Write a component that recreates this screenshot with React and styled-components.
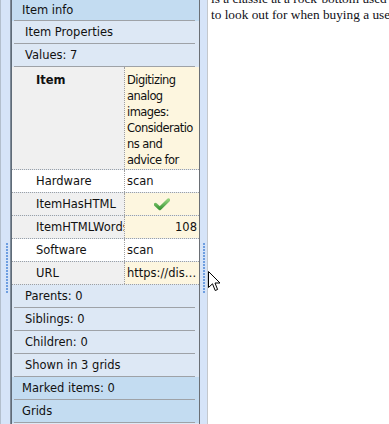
import React from "react";
import styled, { createGlobalStyle } from "styled-components";

const GlobalStyle = createGlobalStyle`
  html, body { margin: 0; padding: 0; background: #fff; overflow: hidden; }
  #root { width: 389px; height: 424px; }
`;

const Frame = styled.div`
  display: flex;
  width: 389px;
  height: 424px;
  overflow: hidden;
  position: relative;
`;

const Gutter = styled.div`
  flex: none;
  width: ${(p) => p.$width}px;
  box-sizing: border-box;
  background: #d6e4f8;
  border-left: ${(p) => (p.$side === "left" ? "1px solid #b3bfcd" : "none")};
  border-right: 1px solid ${(p) => (p.$side === "left" ? "#7d8a98" : "#c4c8cd")};
  display: flex;
  flex-direction: column;
  align-items: flex-start;
  padding-top: 243px;
  padding-left: ${(p) => p.$gripX}px;
`;

const Grip = styled.div`
  width: 2px;
  height: 50px;
  background: repeating-linear-gradient(
    to bottom,
    #6e9ee0 0px,
    #6e9ee0 2px,
    transparent 2px,
    transparent 3px
  );
`;

const Panel = styled.div`
  flex: none;
  width: 189px;
  box-sizing: border-box;
  border-left: 1px solid #5f6b78;
  border-right: 1px solid #6a6f75;
  background: #dde8f5;
  display: flex;
  flex-direction: column;
  font-family: "DejaVu Sans", Verdana, sans-serif;
  font-size: 11.5px;
  color: #111;
`;

const SectionRow = styled.div`
  position: relative;
  flex: none;
  height: ${(p) => p.$h || 23}px;
  box-sizing: border-box;
  padding-left: ${(p) => (p.$tone === "head" ? 10 : 13)}px;
  padding-bottom: 1px;
  display: flex;
  align-items: center;
  background: ${(p) => (p.$tone === "head" ? "#c3dcf1" : "#dde8f5")};
  white-space: nowrap;
  &::after {
    content: "";
    position: absolute;
    left: 2px;
    right: 4px;
    bottom: 0;
    height: 1px;
    background: #9ea2a7;
  }
`;

const PropTable = styled.div`
  display: flex;
  flex-direction: column;
`;

const PropRow = styled.div`
  display: grid;
  grid-template-columns: 113px 74px;
  height: ${(p) => p.$h || 23}px;
  box-sizing: border-box;
  border-bottom: 1px dotted #a0a0a0;
`;

const KeyCell = styled.div`
  box-sizing: border-box;
  padding-left: 24px;
  padding-top: ${(p) => (p.$top ? 6 : 0)}px;
  display: flex;
  align-items: ${(p) => (p.$top ? "flex-start" : "center")};
  background: ${(p) => (p.$readonly ? "#f0f0f0" : "#ffffff")};
  border-right: 1px dotted #a0a0a0;
  overflow: hidden;
  white-space: nowrap;
  font-weight: ${(p) => (p.$bold ? "bold" : "normal")};
`;

const ValueCell = styled.div`
  box-sizing: border-box;
  padding: ${(p) => (p.$top ? "5px 2px 0 2px" : "0 2px")};
  display: flex;
  align-items: ${(p) => (p.$top ? "flex-start" : "center")};
  justify-content: ${(p) =>
    p.$align === "right" ? "flex-end" : p.$align === "center" ? "center" : "flex-start"};
  background: ${(p) => (p.$readonly ? "#fdf6df" : "#ffffff")};
  overflow: hidden;
  min-width: 0;
`;

const WrapText = styled.div`
  line-height: 16px;
  letter-spacing: -0.55px;
  white-space: nowrap;
`;

const Ellipsis = styled.span`
  display: block;
  white-space: nowrap;
  overflow: hidden;
  text-overflow: ellipsis;
  min-width: 0;
`;

const Content = styled.div`
  flex: 1;
  min-width: 0;
  overflow: hidden;
  padding-left: 3px;
  font-family: "Liberation Serif", "Times New Roman", serif;
  font-size: 13.3px;
  line-height: 16px;
  color: #111118;
  white-space: nowrap;
`;

const Para = styled.p`
  margin: -9px 0 0 0;
`;

const Cursor = styled.svg`
  position: absolute;
  left: 208px;
  top: 271px;
  pointer-events: none;
`;

function Check() {
  return (
    <svg width="16" height="13" viewBox="0 0 16 13">
      <defs>
        <linearGradient id="ck" x1="0" y1="0" x2="0" y2="1">
          <stop offset="0" stopColor="#8fd07a" />
          <stop offset="1" stopColor="#3f9a3a" />
        </linearGradient>
      </defs>
      <path
        d="M1.5 6.5 L5.8 10.5 L14.5 2"
        fill="none"
        stroke="url(#ck)"
        strokeWidth="3.4"
        strokeLinecap="round"
        strokeLinejoin="round"
      />
    </svg>
  );
}

const props = [
  { key: "Hardware", value: "scan", readonly: false },
  { key: "ItemHasHTML", value: <Check />, readonly: true, align: "center" },
  { key: "ItemHTMLWords", value: "108", readonly: true, align: "right" },
  { key: "Software", value: "scan", readonly: false },
  { key: "URL", value: <Ellipsis>https://discuss.pixls.us/t/digitizing</Ellipsis>, readonly: true },
];

const lowerSections = ["Parents: 0", "Siblings: 0", "Children: 0", "Shown in 3 grids"];

export default function App() {
  return (
    <>
      <GlobalStyle />
      <Frame>
        <Gutter $side="left" $width={11} $gripX={5}>
          <Grip />
        </Gutter>
        <Panel>
          <SectionRow $tone="head" $h={21}>Item info</SectionRow>
          <SectionRow $tone="sub">Item Properties</SectionRow>
          <SectionRow $tone="sub">Values: 7</SectionRow>
          <PropTable>
            <PropRow $h={103}>
              <KeyCell $readonly $bold $top>Item</KeyCell>
              <ValueCell $readonly $top>
                <WrapText>
                  Digitizing
                  <br />
                  analog
                  <br />
                  images:
                  <br />
                  Consideratio
                  <br />
                  ns and
                  <br />
                  advice for
                </WrapText>
              </ValueCell>
            </PropRow>
            {props.map((p) => (
              <PropRow key={p.key}>
                <KeyCell $readonly={p.readonly}>{p.key}</KeyCell>
                <ValueCell $readonly={p.readonly} $align={p.align}>
                  {p.value}
                </ValueCell>
              </PropRow>
            ))}
          </PropTable>
          {lowerSections.map((s) => (
            <SectionRow key={s} $tone="sub">
              {s}
            </SectionRow>
          ))}
          <SectionRow $tone="head">Marked items: 0</SectionRow>
          <SectionRow $tone="head">Grids</SectionRow>
        </Panel>
        <Gutter $side="right" $width={8} $gripX={3}>
          <Grip />
        </Gutter>
        <Content>
          <Para>
            is a classic at a rock-bottom used price. Here is what
            <br />
            to look out for when buying a used one.
          </Para>
        </Content>
        <Cursor width="13" height="21" viewBox="0 0 13 21">
          <path
            d="M0.5 0.5 L0.5 16.5 L4.5 12.8 L7.2 19.5 L9.6 18.5 L7 12 L12 12 Z"
            fill="#fff"
            stroke="#000"
            strokeWidth="1"
            strokeLinejoin="miter"
          />
        </Cursor>
      </Frame>
    </>
  );
}
